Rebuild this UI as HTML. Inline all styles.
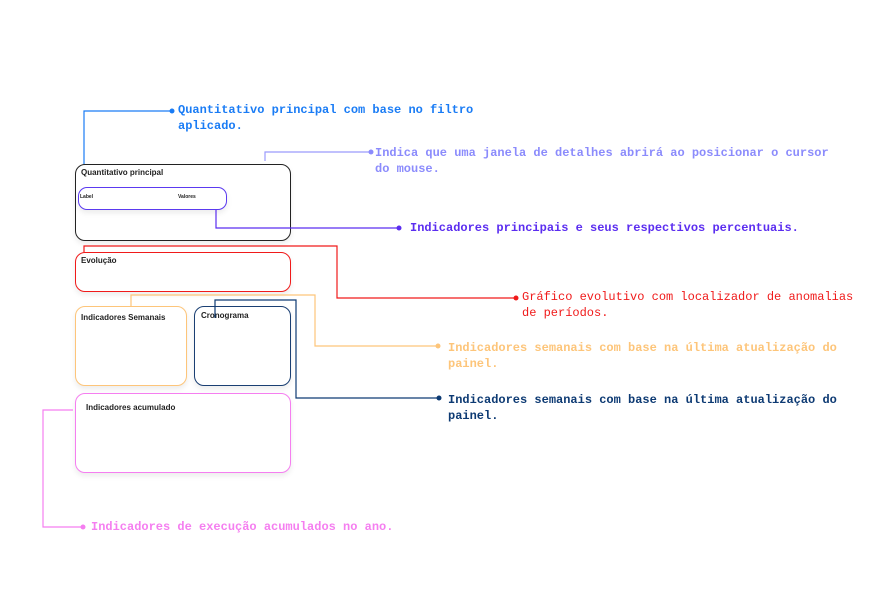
<!DOCTYPE html>
<html><head><meta charset="utf-8"><style>
*{margin:0;padding:0;box-sizing:border-box}
body{width:889px;height:600px;background:#fff;position:relative;overflow:hidden;font-family:"Liberation Sans",sans-serif}
.b{position:absolute;border-radius:10px;background:#fff;box-shadow:0 3px 6px rgba(0,0,0,.08)}
.h{position:absolute;font-size:8px;font-weight:bold;color:#222}
.t{position:absolute;font-family:"Liberation Mono",monospace;font-size:12px;line-height:16px;font-weight:bold;white-space:nowrap}
</style></head><body>
<div class="b" style="left:75px;top:164px;width:216px;height:77px;border:1.3px solid #222"></div>
<div class="h" style="left:81px;top:168px">Quantitativo principal</div>
<div class="b" style="left:78px;top:187px;width:149px;height:23px;border:1.3px solid #5b3af0;border-radius:9px"></div>
<div class="h" style="left:80px;top:194px;font-size:5px">Label</div>
<div class="h" style="left:178px;top:194px;font-size:5px">Valores</div>
<div class="b" style="left:75px;top:252px;width:216px;height:40px;border:1.3px solid #f01a1a"></div>
<div class="h" style="left:81px;top:256px">Evolução</div>
<div class="b" style="left:75px;top:306px;width:112px;height:80px;border:1.3px solid #fdc57a"></div>
<div class="h" style="left:81px;top:313px">Indicadores Semanais</div>
<div class="b" style="left:194px;top:306px;width:97px;height:80px;border:1.3px solid #1a3f73"></div>
<div class="h" style="left:201px;top:311px">Cronograma</div>
<div class="b" style="left:75px;top:393px;width:216px;height:80px;border:1.3px solid #f57ef0"></div>
<div class="h" style="left:86px;top:403px">Indicadores acumulado</div>
<svg width="889" height="600" style="position:absolute;left:0;top:0" fill="none" stroke-width="1.2">
<path d="M84 164V111H172" stroke="#1a7cf5"/><circle cx="172" cy="111" r="2.5" fill="#1a7cf5"/>
<path d="M265 161V152H371" stroke="#9b9bfc"/><circle cx="371" cy="152" r="2.5" fill="#8b8bfc"/>
<path d="M216 210V228H399" stroke="#5b2df0"/><circle cx="399" cy="228" r="2.5" fill="#5b2df0"/>
<path d="M84 252V246H337V298H516" stroke="#f01a1a"/><circle cx="516" cy="298" r="2.5" fill="#f01a1a"/>
<path d="M131 307V295H315V346H438" stroke="#fdc57a"/><circle cx="438" cy="346" r="2.5" fill="#fdc57a"/>
<path d="M215 318V300H296V398H439" stroke="#0d3a73"/><circle cx="439" cy="398" r="2.5" fill="#0d3a73"/>
<path d="M73 410H43V527H83" stroke="#f57ef0"/><circle cx="83" cy="527" r="2.5" fill="#f57ef0"/>
</svg>
<div class="t" style="left:178px;top:102px;color:#1a7cf5">Quantitativo principal com base no filtro<br>aplicado.</div>
<div class="t" style="left:375px;top:145px;color:#8b8bfc">Indica que uma janela de detalhes abrirá ao posicionar o cursor<br>do mouse.</div>
<div class="t" style="left:410px;top:220px;color:#5b2df0">Indicadores principais e seus respectivos percentuais.</div>
<div class="t" style="left:522px;top:289px;color:#f01a1a;font-weight:normal">Gráfico evolutivo com localizador de anomalias<br>de períodos.</div>
<div class="t" style="left:448px;top:340px;color:#fdc57a">Indicadores semanais com base na última atualização do<br>painel.</div>
<div class="t" style="left:448px;top:392px;color:#0d3a73">Indicadores semanais com base na última atualização do<br>painel.</div>
<div class="t" style="left:91px;top:519px;color:#f57ef0">Indicadores de execução acumulados no ano.</div>
</body></html>
